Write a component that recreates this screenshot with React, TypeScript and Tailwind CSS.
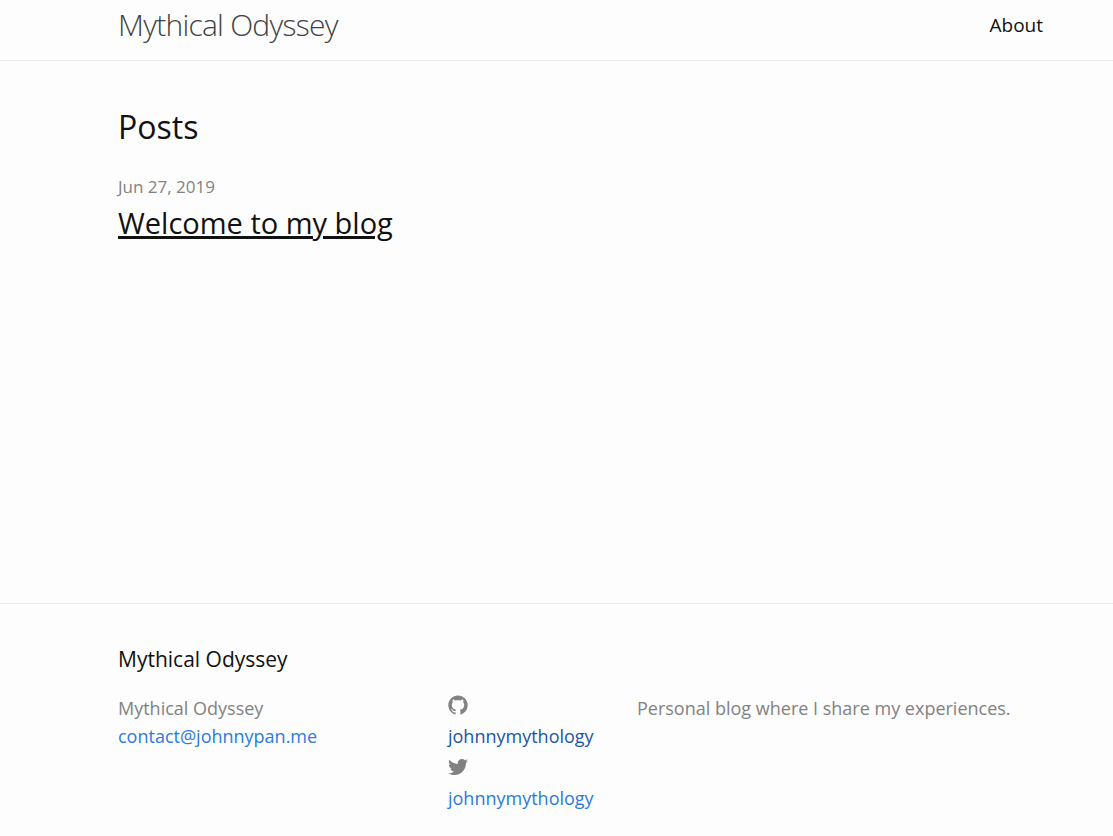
function GithubIcon() {
  return (
    <svg viewBox="0 0 16 16" className="size-5" fill="currentColor" aria-hidden="true">
      <path d="M7.999,0.431c-4.285,0-7.76,3.474-7.76,7.761 c0,3.428,2.223,6.337,5.307,7.363c0.388,0.071,0.53-0.168,0.53-0.374c0-0.184-0.007-0.672-0.01-1.32 c-2.159,0.469-2.614-1.04-2.614-1.04c-0.353-0.896-0.862-1.135-0.862-1.135c-0.705-0.481,0.053-0.472,0.053-0.472 c0.779,0.055,1.189,0.8,1.189,0.8c0.692,1.186,1.816,0.843,2.258,0.645c0.071-0.502,0.271-0.843,0.493-1.037 C4.86,11.425,3.049,10.76,3.049,7.786c0-0.847,0.302-1.54,0.799-2.082C3.768,5.507,3.501,4.718,3.924,3.65 c0,0,0.652-0.209,2.134,0.796C6.677,4.273,7.34,4.187,8,4.184c0.659,0.003,1.323,0.089,1.943,0.261 c1.482-1.004,2.132-0.796,2.132-0.796c0.423,1.068,0.157,1.857,0.077,2.054c0.497,0.542,0.798,1.235,0.798,2.082 c0,2.981-1.814,3.637-3.543,3.829c0.279,0.24,0.527,0.713,0.527,1.437c0,1.037-0.01,1.874-0.01,2.129 c0,0.208,0.14,0.449,0.534,0.373c3.081-1.028,5.302-3.935,5.302-7.362C15.76,3.906,12.285,0.431,7.999,0.431z" />
    </svg>
  );
}

function TwitterIcon() {
  return (
    <svg viewBox="0 0 16 16" className="size-5" fill="currentColor" aria-hidden="true">
      <path d="M15.969,3.058c-0.586,0.26-1.217,0.436-1.878,0.515c0.675-0.405,1.194-1.045,1.438-1.809c-0.632,0.375-1.332,0.647-2.076,0.793c-0.596-0.636-1.446-1.033-2.387-1.033c-1.806,0-3.27,1.464-3.27,3.27 c0,0.256,0.029,0.506,0.085,0.745C5.163,5.404,2.753,4.102,1.14,2.124C0.859,2.607,0.698,3.168,0.698,3.767 c0,1.134,0.577,2.135,1.455,2.722C1.616,6.472,1.112,6.325,0.671,6.08c0,0.014,0,0.027,0,0.041c0,1.584,1.127,2.906,2.623,3.206 C3.02,9.402,2.731,9.442,2.433,9.442c-0.211,0-0.416-0.021-0.615-0.059c0.416,1.299,1.624,2.245,3.055,2.271 c-1.119,0.877-2.529,1.4-4.061,1.4c-0.264,0-0.524-0.015-0.78-0.046c1.447,0.928,3.166,1.469,5.013,1.469 c6.015,0,9.304-4.983,9.304-9.304c0-0.142-0.003-0.283-0.009-0.423C14.976,4.29,15.531,3.714,15.969,3.058z" />
    </svg>
  );
}

export default function App() {
  return (
    <div className="flex min-h-screen flex-col bg-[#fdfdfd] font-['Open_Sans','Noto_Sans',sans-serif] text-[#111]">
      <header className="border-b border-[#e8e8e8]">
        <div className="flex h-[60px] items-center justify-between pr-[70px] pb-2.5 pl-[118px]">
          <a href="#" className="text-[30px] leading-[48px] font-light tracking-tight text-[#424242]">
            Mythical Odyssey
          </a>
          <nav>
            <a href="#" className="text-[19px] leading-7">
              About
            </a>
          </nav>
        </div>
      </header>
      <main className="grow pt-10 pr-[70px] pl-[118px]">
        <h1 className="text-[32px] leading-[52px]">Posts</h1>
        <time dateTime="2019-06-27" className="mt-[22px] block text-[17px] leading-6 text-[#828282]">
          Jun 27, 2019
        </time>
        <h2 className="mt-1 text-[29px] leading-10">
          <a href="#" className="underline decoration-3 underline-offset-2">
            Welcome to my blog
          </a>
        </h2>
      </main>
      <footer className="border-t border-[#e8e8e8] pt-10 pr-[70px] pb-6 pl-[118px]">
        <h2 className="text-[21px] leading-[30px]">Mythical Odyssey</h2>
        <div className="mt-5 flex text-[18px] leading-7 text-[#828282]">
          <div className="w-[330px] shrink-0">
            <p>Mythical Odyssey</p>
            <a href="mailto:contact@johnnypan.me" className="text-[#2a7ae2]">
              contact@johnnypan.me
            </a>
          </div>
          <ul className="flex w-[189px] shrink-0 flex-col gap-1.5">
            <li>
              <a href="https://github.com/johnnymythology" className="block text-[#1756a9]">
                <span className="block h-7 pt-px text-[#828282]">
                  <GithubIcon />
                </span>
                johnnymythology
              </a>
            </li>
            <li>
              <a href="https://twitter.com/johnnymythology" className="block text-[#2a7ae2]">
                <span className="block h-7 pt-px text-[#828282]">
                  <TwitterIcon />
                </span>
                johnnymythology
              </a>
            </li>
          </ul>
          <p>Personal blog where I share my experiences.</p>
        </div>
      </footer>
    </div>
  );
}
